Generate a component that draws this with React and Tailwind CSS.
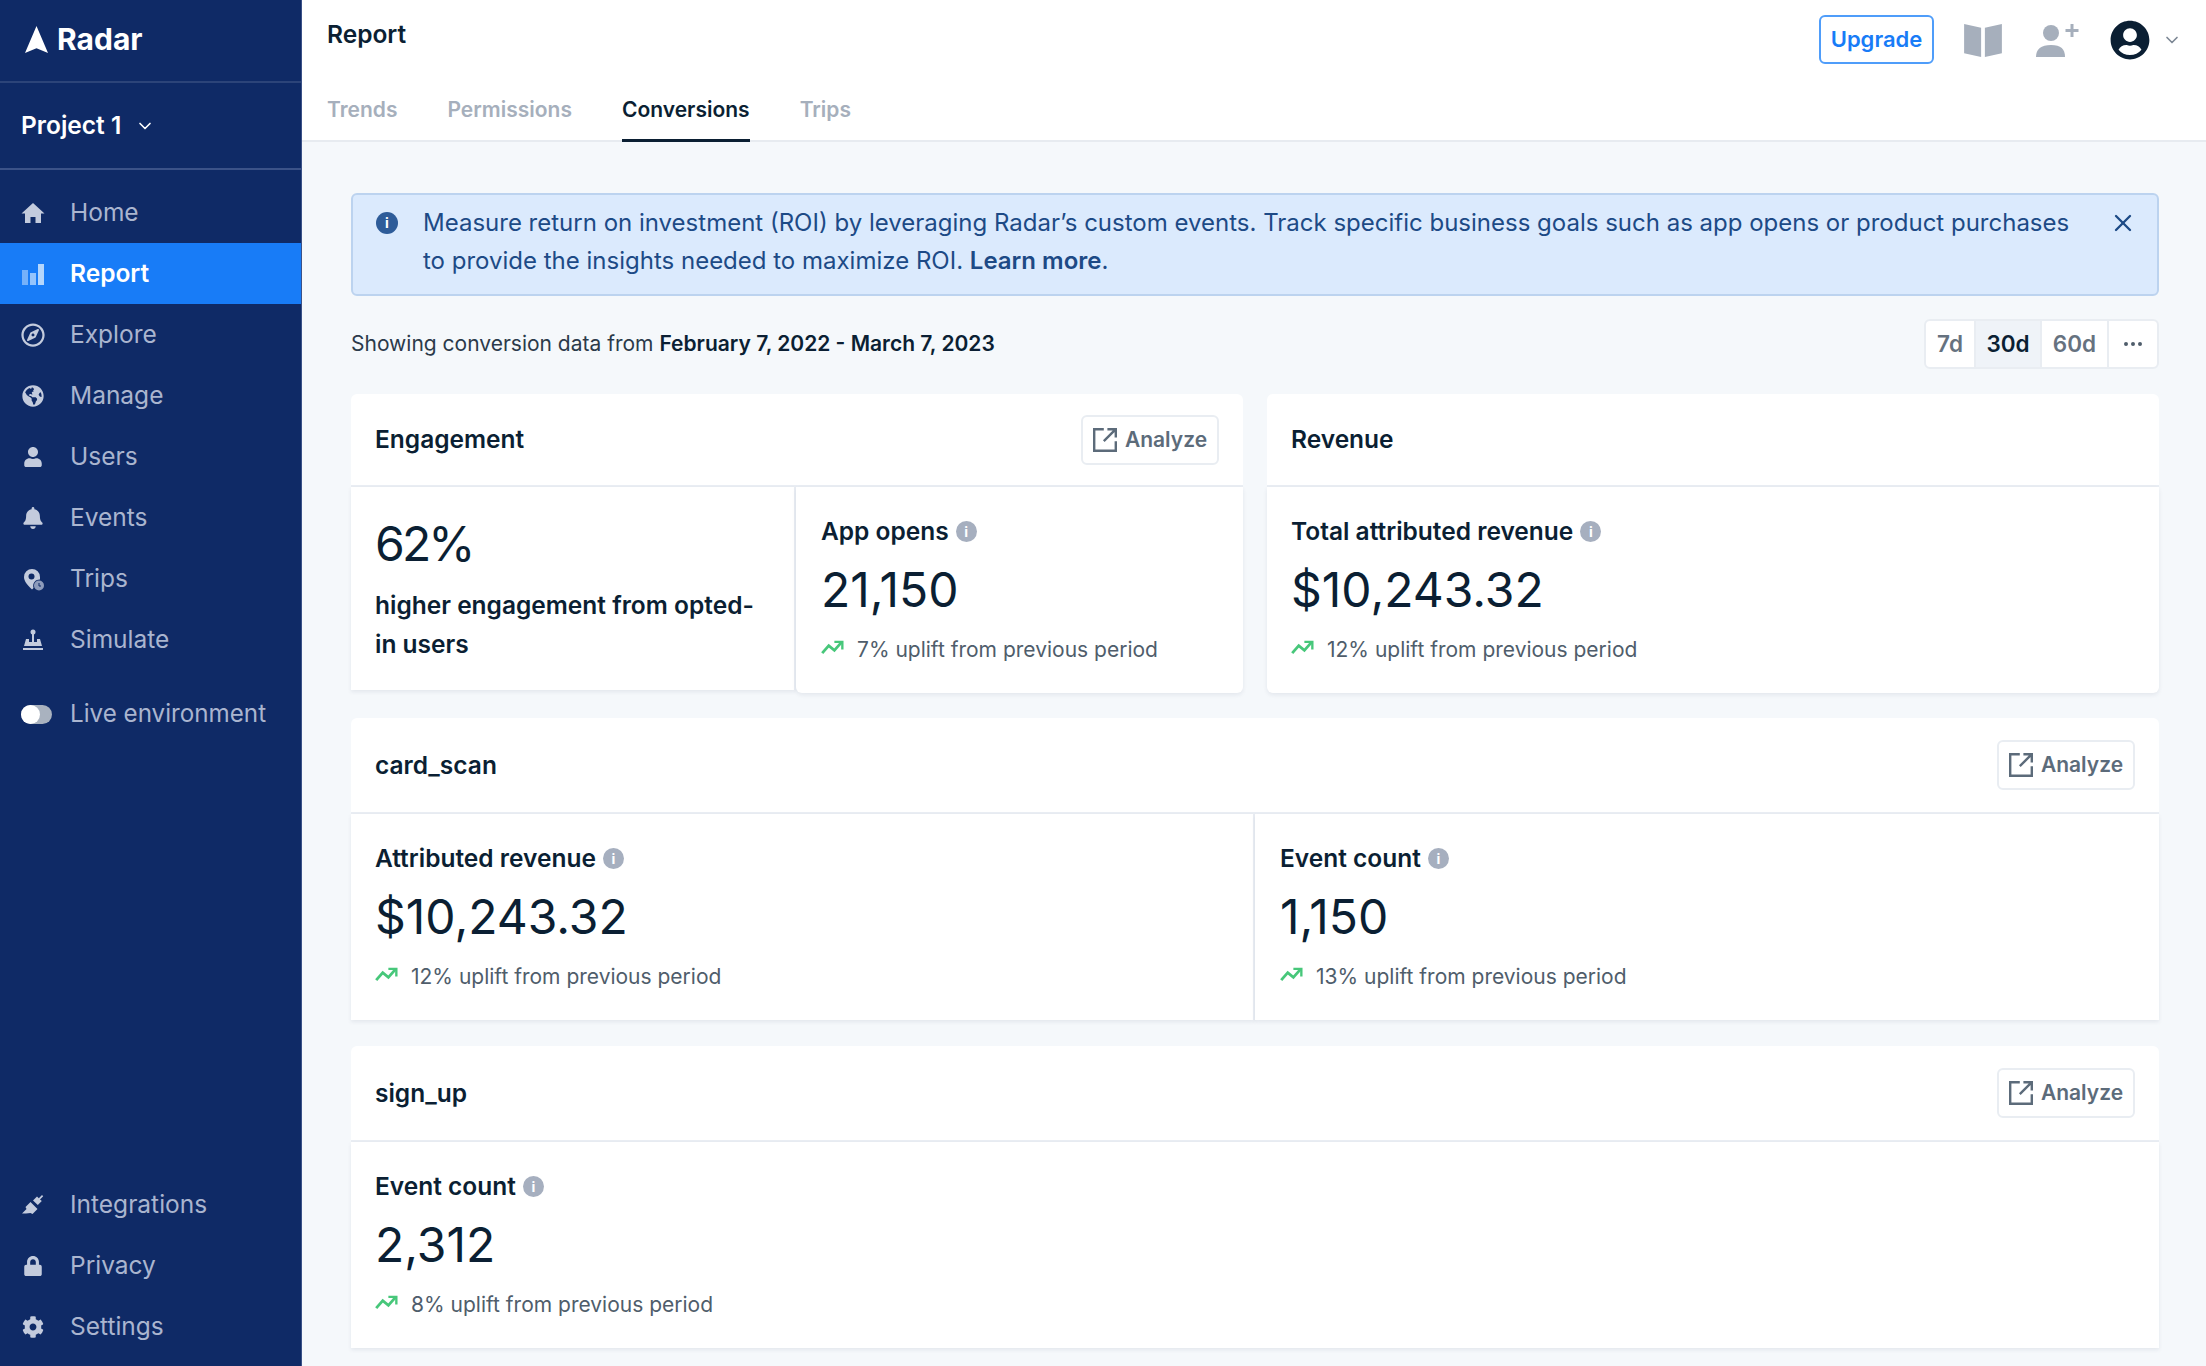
import { FaRegCompass, FaGlobeAmericas, FaUser, FaBell, FaLock, FaCog, FaUserCircle } from 'react-icons/fa';
import { FiChevronDown, FiX, FiMoreHorizontal } from 'react-icons/fi';

const HomeIcon = () => (
  <svg viewBox="0 0 24 24" className="w-6 h-6" fill="currentColor">
    <path d="M12 2 0.500 12.500H4V22h5.500v-6h5v6H20v-9.500h3.500Z" />
  </svg>
);

const PlugIcon = () => (
  <svg viewBox="0 0 24 24" className="w-6 h-6" fill="currentColor">
    <path d="M1 23l4.500-4.500-1-2 5-5 7 7-5 5-2-1L5 23Z" transform="translate(0 -2.500)" />
    <path d="M12 7.500l4-4 1.800 1.800L21 2l1.200 1.200-3.200 3.200L20.800 8l-4 4Z" />
  </svg>
);

const PinIcon = () => (
  <svg viewBox="0 0 24 24" className="w-6 h-6" fill="currentColor">
    <path d="M11 2a8 8 0 0 0-8 8c0 4.500 4 8.700 8 12.500l1.500-1.500a6.500 6.500 0 0 1 6.500-8.600c0-.8 0-1.600 0-2.400a8 8 0 0 0-8-8Z" />
    <circle cx="10.500" cy="9.500" r="3" fill="#0f2a66" />
    <circle cx="18" cy="18.500" r="5" fill="#8d9bbb" />
    <path d="M18 16v3h2" stroke="#0f2a66" strokeWidth="1" fill="none" />
  </svg>
);

const JoystickIcon = () => (
  <svg viewBox="0 0 24 24" className="w-6 h-6" fill="currentColor">
    <circle cx="12" cy="4" r="2.500" />
    <rect x="11" y="5" width="2" height="9" />
    <path d="M8 11v3h8v-3l3 0 2 7H3l2-7Z" />
    <rect x="2" y="20" width="20" height="2" />
  </svg>
);

const BarsIcon = () => (
  <svg viewBox="0 0 24 24" className="w-6 h-6" fill="#b4d6fc">
    <rect x="1" y="8" width="6" height="15" opacity="0.6" />
    <rect x="9" y="11" width="6" height="12" opacity="0.8" />
    <rect x="17" y="2" width="6" height="21" />
  </svg>
);

const BookIcon = () => (
  <svg viewBox="0 0 40 36" className="w-[38px] h-[34px]" fill="#a6afbc">
    <path d="M0 1l18 4v31L0 32Z" />
    <path d="M40 1l-18 4v31l18-4Z" />
  </svg>
);

const AddUserIcon = () => (
  <svg viewBox="0 0 44 34" className="w-[44px] h-[34px]" fill="#a6afbc">
    <circle cx="15" cy="10" r="8" />
    <path d="M0 34c0-8 5-12 15-12s14 4 14 12Z" />
    <path d="M36 1v13M29.500 7.500h13" stroke="#a6afbc" strokeWidth="3" fill="none" />
  </svg>
);

const AnalyzeIcon = () => (
  <svg viewBox="2 2 20 20" className="w-6 h-6" fill="none" stroke="#5c6b7a" strokeWidth="2">
    <path d="M11 3H3v18h18v-8" />
    <path d="M11 13 21 3M14 3h7v7" />
  </svg>
);

const TrendIcon = () => (
  <svg viewBox="0 0 24 16" className="w-[23px] h-[15px] mr-[13px] -mt-[6px]" fill="none" stroke="#47c77a" strokeWidth="3">
    <path d="M1 14 8 6l6 5 8-9" />
    <path d="M14 2h8.500v8" strokeWidth="2.500" />
  </svg>
);

const InfoDot = () => (
  <span className="ml-[7px] w-[21px] h-[21px] rounded-full bg-[#a6afbf] text-white text-[14px] font-bold flex items-center justify-center">
    i
  </span>
);

const navTop = [
  { label: 'Home', icon: <HomeIcon /> },
  { label: 'Report', icon: <BarsIcon />, active: true },
  { label: 'Explore', icon: <FaRegCompass className="w-6 h-6" /> },
  { label: 'Manage', icon: <FaGlobeAmericas className="w-[22px] h-[22px]" /> },
  { label: 'Users', icon: <FaUser className="w-5 h-5" /> },
  { label: 'Events', icon: <FaBell className="w-[22px] h-[22px]" /> },
  { label: 'Trips', icon: <PinIcon /> },
  { label: 'Simulate', icon: <JoystickIcon /> },
];

const navBottom = [
  { label: 'Integrations', icon: <PlugIcon /> },
  { label: 'Privacy', icon: <FaLock className="w-5 h-5" /> },
  { label: 'Settings', icon: <FaCog className="w-[22px] h-[22px]" /> },
];

function NavItem({ item }) {
  return (
    <div className={`h-[61px] flex items-center pl-[21px] ${item.active ? 'bg-[#187cf7] text-white font-semibold' : 'text-[#aab5cf]'}`}>
      <span className={`w-6 flex justify-center ${item.active ? '' : 'text-[#c3cbdd]'}`}>{item.icon}</span>
      <span className="ml-[25px] text-[24.500px]">{item.label}</span>
    </div>
  );
}

function Sidebar() {
  return (
    <aside className="w-[302px] h-screen shrink-0 bg-[#0f2a66] flex flex-col border-r border-[#3b5288]">
      <div className="h-[83px] flex items-center pl-[25px] pb-[2px] border-b-2 border-[#2c4479]">
        <svg viewBox="0 0 24 28" className="w-[23px] h-[27px]" fill="#ffffff">
          <path d="M12 0 24 28 12 23 0 28Z" />
        </svg>
        <span className="ml-[9px] text-white font-bold text-[30px]">Radar</span>
      </div>
      <div className="h-[87px] flex items-center pl-[21px] border-b-2 border-[#3b5288] text-white">
        <span className="font-semibold text-[24.500px]">Project 1</span>
        <FiChevronDown className="ml-[14px] w-5 h-5" />
      </div>
      <nav className="pt-[12px]">
        {navTop.map((item) => (
          <NavItem key={item.label} item={item} />
        ))}
        <div className="h-[61px] mt-[14px] flex items-center pl-[21px] text-[#aab5cf]">
          <span className="w-[31px] h-[19px] rounded-full bg-[#a9b2bf] flex items-center">
            <span className="w-[19px] h-[19px] rounded-full bg-white" />
          </span>
          <span className="ml-[18px] text-[24.200px]">Live environment</span>
        </div>
      </nav>
      <div className="mt-auto pb-[9px]">
        {navBottom.map((item) => (
          <NavItem key={item.label} item={item} />
        ))}
      </div>
    </aside>
  );
}

function Topbar() {
  const tabs = ['Trends', 'Permissions', 'Conversions', 'Trips'];
  return (
    <header className="h-[142px] shrink-0 bg-white border-b-2 border-[#e7ebf0] pl-[25px] pr-[24px] flex flex-col">
      <div className="h-[76px] shrink-0 flex items-start justify-between">
        <h1 className="mt-[16px] text-[24.500px] font-semibold text-[#0b1f33]">Report</h1>
        <div className="flex items-center mt-[15px]">
          <button className="w-[115px] h-[49px] rounded-md border-2 border-[#4f9dfa] text-[#187cf7] font-semibold text-[22px]">
            Upgrade
          </button>
          <span className="ml-[30px]"><BookIcon /></span>
          <span className="ml-[34px]"><AddUserIcon /></span>
          <FaUserCircle className="ml-[30px] w-[40px] h-[40px] text-[#0b1f33]" />
          <FiChevronDown className="ml-[12px] w-5 h-5 text-[#7c8794]" />
        </div>
      </div>
      <div className="flex gap-[50px]">
        {tabs.map((tab) => (
          <div
            key={tab}
            className={`h-[66px] pt-[18px] text-[21px] font-semibold border-b-[3px] ${tab === 'Conversions' ? 'text-[#0b1f33] border-[#0b1f33]' : 'text-[#a6afbc] border-transparent'}`}
          >
            {tab}
          </div>
        ))}
      </div>
    </header>
  );
}

function AnalyzeButton() {
  return (
    <button className="w-[138px] h-[50px] rounded-md border-2 border-[#e9edf2] bg-white flex items-center justify-center gap-2 text-[#5c6b7a] text-[21px] font-semibold">
      <AnalyzeIcon />
      Analyze
    </button>
  );
}

function CardHeader({ title, analyze, height }) {
  return (
    <div className={`${height} px-[24px] bg-white rounded-t-md border-b-2 border-[#e9edf3] flex items-center justify-between`}>
      <h2 className="text-[24.500px] font-semibold text-[#0b1f33]">{title}</h2>
      {analyze && <AnalyzeButton />}
    </div>
  );
}

function Metric({ label, value, uplift, className = '' }) {
  return (
    <div className={`bg-white px-[24px] pt-[27px] h-[206px] shadow-[0_2px_4px_rgba(20,40,80,0.08)] ${className}`}>
      <div className="h-[34px] flex items-center text-[24.500px] font-semibold text-[#0b1f33]">
        {label}
        <InfoDot />
      </div>
      <div className="mt-3 h-[60px] leading-[60px] text-[48px] text-[#0b1f33]">{value}</div>
      <div className="mt-[13px] h-[34px] flex items-center text-[#4f5d6b] text-[21px]">
        <TrendIcon />
        {uplift}
      </div>
    </div>
  );
}

export default function App() {
  return (
    <div className="flex h-screen overflow-hidden bg-[#f5f8fb] font-['Inter',sans-serif]">
      <Sidebar />
      <div className="flex-1 flex flex-col min-w-0">
        <Topbar />
        <main className="flex-1 pt-[51px] pl-[49px] pr-[47px]">
          <div className="h-[103px] rounded-md border-2 border-[#bcd3ef] bg-[#dbeafd] flex items-start pl-[23px] pr-[20px] pt-[9px] text-[#1d4a86] text-[24px] leading-[38px]">
            <span className="mt-[8px] w-[22px] h-[22px] shrink-0 rounded-full bg-[#2e5c99] text-white text-[14px] font-bold flex items-center justify-center">i</span>
            <p className="ml-[25px] flex-1">
              Measure return on investment (ROI) by leveraging Radar’s custom events. Track specific business goals such as app opens or product purchases to provide the insights needed to maximize ROI. <span className="font-semibold">Learn more</span>.
            </p>
            <FiX className="mt-[5px] w-7 h-7 shrink-0 ml-6" />
          </div>

          <div className="mt-[23px] flex items-center justify-between h-[50px]">
            <p className="text-[21px] text-[#2b3a4a]">
              Showing conversion data from <span className="font-semibold text-[#0b1f33]">February 7, 2022 - March 7, 2023</span>
            </p>
            <div className="flex h-[50px] rounded-md border-2 border-[#e9edf2] bg-white text-[22.500px] font-semibold text-[#66727f] divide-x-2 divide-[#e9edf2]">
              <span className="w-[50px] flex items-center justify-center">7d</span>
              <span className="w-[66px] flex items-center justify-center bg-[#eff3f8] text-[#0b1f33]">30d</span>
              <span className="w-[67px] flex items-center justify-center">60d</span>
              <span className="flex-1 w-[48px] flex items-center justify-center text-[#4f5d6b]"><FiMoreHorizontal className="w-6 h-6" /></span>
            </div>
          </div>

          <div className="mt-[25px] grid grid-cols-2 gap-[24px]">
            <section>
              <CardHeader title="Engagement" analyze height="h-[93px]" />
              <div className="flex items-start">
                <div className="w-[445px] h-[203px] bg-white border-r-2 border-[#e9edf3] pl-[24px] pr-[32px] pt-[27px] shadow-[0_2px_4px_rgba(20,40,80,0.08)]">
                  <div className="h-[60px] leading-[60px] text-[48px] tracking-[-0.06em] text-[#0b1f33]">62%</div>
                  <p className="mt-3 text-[24.500px] leading-[39px] font-semibold text-[#0b1f33]">higher engagement from opted-in users</p>
                </div>
                <Metric label="App opens" value="21,150" uplift="7% uplift from previous period" className="flex-1 rounded-b-md pl-[25px]" />
              </div>
            </section>
            <section>
              <CardHeader title="Revenue" height="h-[93px]" />
              <Metric label="Total attributed revenue" value="$10,243.32" uplift="12% uplift from previous period" className="rounded-b-md" />
            </section>
          </div>

          <section className="mt-[25px]">
            <CardHeader title="card_scan" analyze height="h-[96px]" />
            <div className="grid grid-cols-2">
              <Metric label="Attributed revenue" value="$10,243.32" uplift="12% uplift from previous period" className="border-r-2 border-[#e9edf3]" />
              <Metric label="Event count" value="1,150" uplift="13% uplift from previous period" className="pl-[25px]" />
            </div>
          </section>

          <section className="mt-[26px]">
            <CardHeader title="sign_up" analyze height="h-[96px]" />
            <Metric label="Event count" value="2,312" uplift="8% uplift from previous period" />
          </section>
        </main>
      </div>
    </div>
  );
}
